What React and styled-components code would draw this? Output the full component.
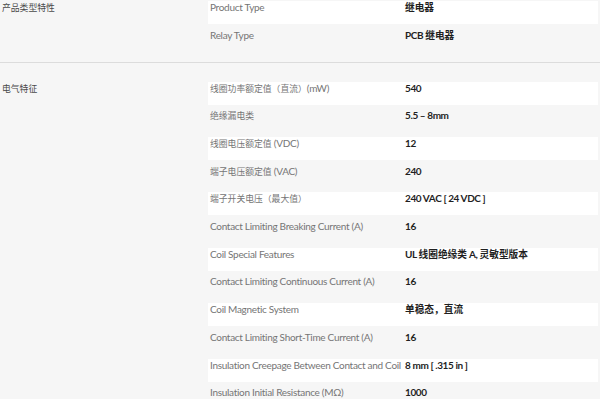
import React from 'react';
import styled, { createGlobalStyle } from 'styled-components';

const GlobalStyle = createGlobalStyle`
  html, body {
    margin: 0;
    padding: 0;
    background: #f6f6f6;
  }
  body {
    font-family: Lato, "Noto Sans CJK SC", sans-serif;
    font-size: 10px;
    line-height: 13px;
  }
`;

const Page = styled.div`
  width: 600px;
  overflow: hidden;
`;

const Group = styled.section`
  display: grid;
  grid-template-columns: 208px 1fr;
  padding: ${p => p.$top}px 2px 10.3px 0;
  border-bottom: ${p => (p.$last ? 'none' : '1px solid #dcdcdc')};
`;

const GroupTitle = styled.h3`
  margin: 0;
  padding-left: 2px;
  font-size: 10px;
  font-weight: 400;
  line-height: 13px;
  color: #4a4a4a;
`;

const List = styled.ul`
  list-style: none;
  margin: 0;
  padding: 0;
  display: flex;
  flex-direction: column;
  gap: 4.7px;
`;

const Row = styled.li`
  display: grid;
  grid-template-columns: 195px 1fr;
  height: 23px;
  padding-left: 2px;
  background: ${p => (p.$odd ? '#ffffff' : 'transparent')};
`;

const Label = styled.span`
  color: #757575;
  letter-spacing: -0.3px;
  white-space: nowrap;
`;

const Value = styled.span`
  color: #1f1f1f;
  font-weight: 700;
  letter-spacing: -0.4px;
  white-space: nowrap;
`;

// chinese runs in labels are set a bit smaller than latin text
const Cjk = styled.span`
  font-size: ${p => p.$size}px;
  letter-spacing: 0;
`;

const CJK_RE = /([\u3000-\u303f\u4e00-\u9fff\uff00-\uffef]+)/;

const Mixed = ({ text, size }) =>
  text.split(CJK_RE).map((part, i) =>
    CJK_RE.test(part) ? (
      <Cjk key={i} $size={size}>
        {part}
      </Cjk>
    ) : (
      part
    )
  );

const groups = [
  {
    title: '产品类型特性',
    top: 1,
    rows: [
      ['Product Type', '继电器'],
      ['Relay Type', 'PCB 继电器'],
    ],
  },
  {
    title: '电气特征',
    top: 18.7,
    rows: [
      ['线圈功率额定值（直流）(mW)', '540'],
      ['绝缘漏电类', '5.5 – 8mm'],
      ['线圈电压额定值 (VDC)', '12'],
      ['端子电压额定值 (VAC)', '240'],
      ['端子开关电压（最大值）', '240 VAC [ 24 VDC ]'],
      ['Contact Limiting Breaking Current (A)', '16'],
      ['Coil Special Features', 'UL 线圈绝缘类 A, 灵敏型版本'],
      ['Contact Limiting Continuous Current (A)', '16'],
      ['Coil Magnetic System', '单稳态，直流'],
      ['Contact Limiting Short-Time Current (A)', '16'],
      ['Insulation Creepage Between Contact and Coil', '8 mm [ .315 in ]'],
      ['Insulation Initial Resistance (MΩ)', '1000'],
    ],
  },
];

export default function App() {
  return (
    <Page>
      <GlobalStyle />
      {groups.map((g, gi) => (
        <Group key={g.title} $top={g.top} $last={gi === groups.length - 1}>
          <GroupTitle>
            <Mixed text={g.title} size={8.8} />
          </GroupTitle>
          <List>
            {g.rows.map(([label, value], i) => (
              <Row key={label} $odd={i % 2 === 0}>
                <Label>
                  <Mixed text={label} size={8.8} />
                </Label>
                <Value>
                  <Mixed text={value} size={9.7} />
                </Value>
              </Row>
            ))}
          </List>
        </Group>
      ))}
    </Page>
  );
}
